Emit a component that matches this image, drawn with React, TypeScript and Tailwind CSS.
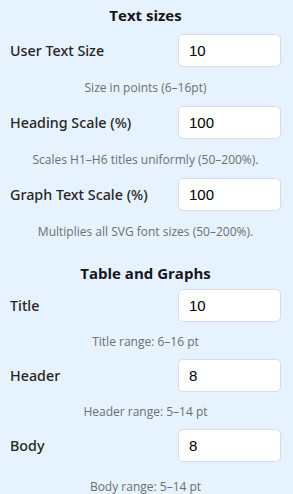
import React from "react";

type Field = { label: string; value: string; help: string };

const textSizes: Field[] = [
  { label: "User Text Size", value: "10", help: "Size in points (6–16pt)" },
  { label: "Heading Scale (%)", value: "100", help: "Scales H1–H6 titles uniformly (50–200%)." },
  { label: "Graph Text Scale (%)", value: "100", help: "Multiplies all SVG font sizes (50–200%)." },
];

const tableGraphs: Field[] = [
  { label: "Title", value: "10", help: "Title range: 6–16 pt" },
  { label: "Header", value: "8", help: "Header range: 5–14 pt" },
  { label: "Body", value: "8", help: "Body range: 5–14 pt" },
];

function Row({ field, helpClass, after }: { field: Field; helpClass: string; after: string }) {
  return (
    <div className={`flex flex-col ${after}`}>
      <div className="flex items-center justify-between h-[33px]">
        <label className="text-[14.3px] text-[#262626] font-medium font-['Noto_Sans',sans-serif]">{field.label}</label>
        <input
          defaultValue={field.value}
          className="w-[103px] h-[33px] bg-white border border-[#d9dde3] rounded-[5px] px-[10px] text-[15px] text-black outline-none font-['Liberation_Sans',Arial,sans-serif]"
        />
      </div>
      <p className={`h-[16px] leading-[16px] text-center text-[12px] text-[#6b6f76] ${helpClass}`}>{field.help}</p>
    </div>
  );
}

export default function App() {
  return (
    <div className="flex flex-col w-[293px] h-[494px] overflow-hidden bg-[#e6f2fd] pl-[10px] pr-[12px] font-['Open_Sans',sans-serif]">
      <h2 className="mt-[5px] h-[20px] leading-[20px] text-center text-[15px] font-bold text-[#16161e]">Text sizes</h2>
      <div className="flex flex-col mt-[9px]">
        {textSizes.map((f) => (
          <Row key={f.label} field={f} helpClass="mt-[13px]" after="mb-[10px]" />
        ))}
      </div>
      <h2 className="mt-[13px] h-[20px] leading-[20px] text-center text-[15px] font-bold text-[#16161e]">Table and Graphs</h2>
      <div className="flex flex-col mt-[6px]">
        {tableGraphs.map((f, i) => (
          <Row
            key={f.label}
            field={f}
            helpClass={i === tableGraphs.length - 1 ? "mt-[17px]" : "mt-[12px]"}
            after="mb-[9px]"
          />
        ))}
      </div>
    </div>
  );
}
